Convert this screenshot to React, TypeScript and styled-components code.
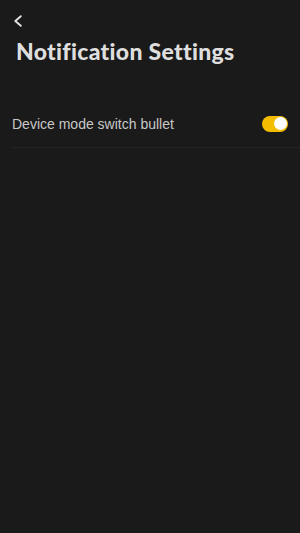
import React, { useState } from 'react'
import styled, { createGlobalStyle } from 'styled-components'

const GlobalStyle = createGlobalStyle`
  html, body {
    margin: 0;
    padding: 0;
    background: #1a1a1a;
  }
  body {
    font-family: "Liberation Sans", Arial, sans-serif;
  }
`

function App() {
  const [on, setOn] = useState(true)

  return (
    <>
      <GlobalStyle />
      <Page>
        <Header>
          <BackButton aria-label="back">
            <svg width="10" height="12" viewBox="0 0 10 12" fill="none">
              <path d="M7.8 1.2 L2.3 6 L7.8 10.8" stroke="#e6e6e6" strokeWidth="1.8" strokeLinecap="round" strokeLinejoin="round" />
            </svg>
          </BackButton>
          <Title>Notification Settings</Title>
        </Header>
        <List>
          <Row>
            <Label>Device mode switch bullet</Label>
            <Toggle data-on={on ? '1' : '0'} onClick={() => setOn(!on)}>
              <span />
            </Toggle>
          </Row>
        </List>
      </Page>
    </>
  )
}

export default App

const Page = styled.div`
  width: 300px;
  min-height: 533px;
  background: #1a1a1a;
`

const Header = styled.div`
  display: flex;
  flex-direction: column;
  padding: 13px 16px 0 16px;
`

const BackButton = styled.button`
  background: none;
  border: none;
  padding: 0;
  margin-left: -3px;
  width: 12px;
  height: 16px;
  display: flex;
  align-items: center;
  cursor: pointer;
`

const Title = styled.h1`
  margin: 8px 0 0 0;
  font-family: Lato, "Noto Sans", sans-serif;
  font-size: 23px;
  line-height: 28px;
  font-weight: 900;
  color: #dedede;
  letter-spacing: 0.3px;
`

const List = styled.div`
  margin-top: 35px;
  padding-left: 12px;
`

const Row = styled.div`
  display: flex;
  align-items: center;
  justify-content: space-between;
  height: 47px;
  padding-right: 12px;
  border-bottom: 1px solid #232323;
`

const Label = styled.span`
  font-size: 14px;
  color: #c8c8c8;
`

const Toggle = styled.button`
  position: relative;
  width: 26px;
  height: 16px;
  border: none;
  border-radius: 8px;
  padding: 0;
  background: #6a6a6a;
  cursor: pointer;

  &[data-on="1"] {
    background: #f5bd00;
  }

  span {
    position: absolute;
    top: 1.5px;
    left: 1.5px;
    width: 13px;
    height: 13px;
    border-radius: 50%;
    background: #ffffff;
    transition: left 0.2s;
  }

  &[data-on="1"] span {
    left: 11.5px;
  }
`
